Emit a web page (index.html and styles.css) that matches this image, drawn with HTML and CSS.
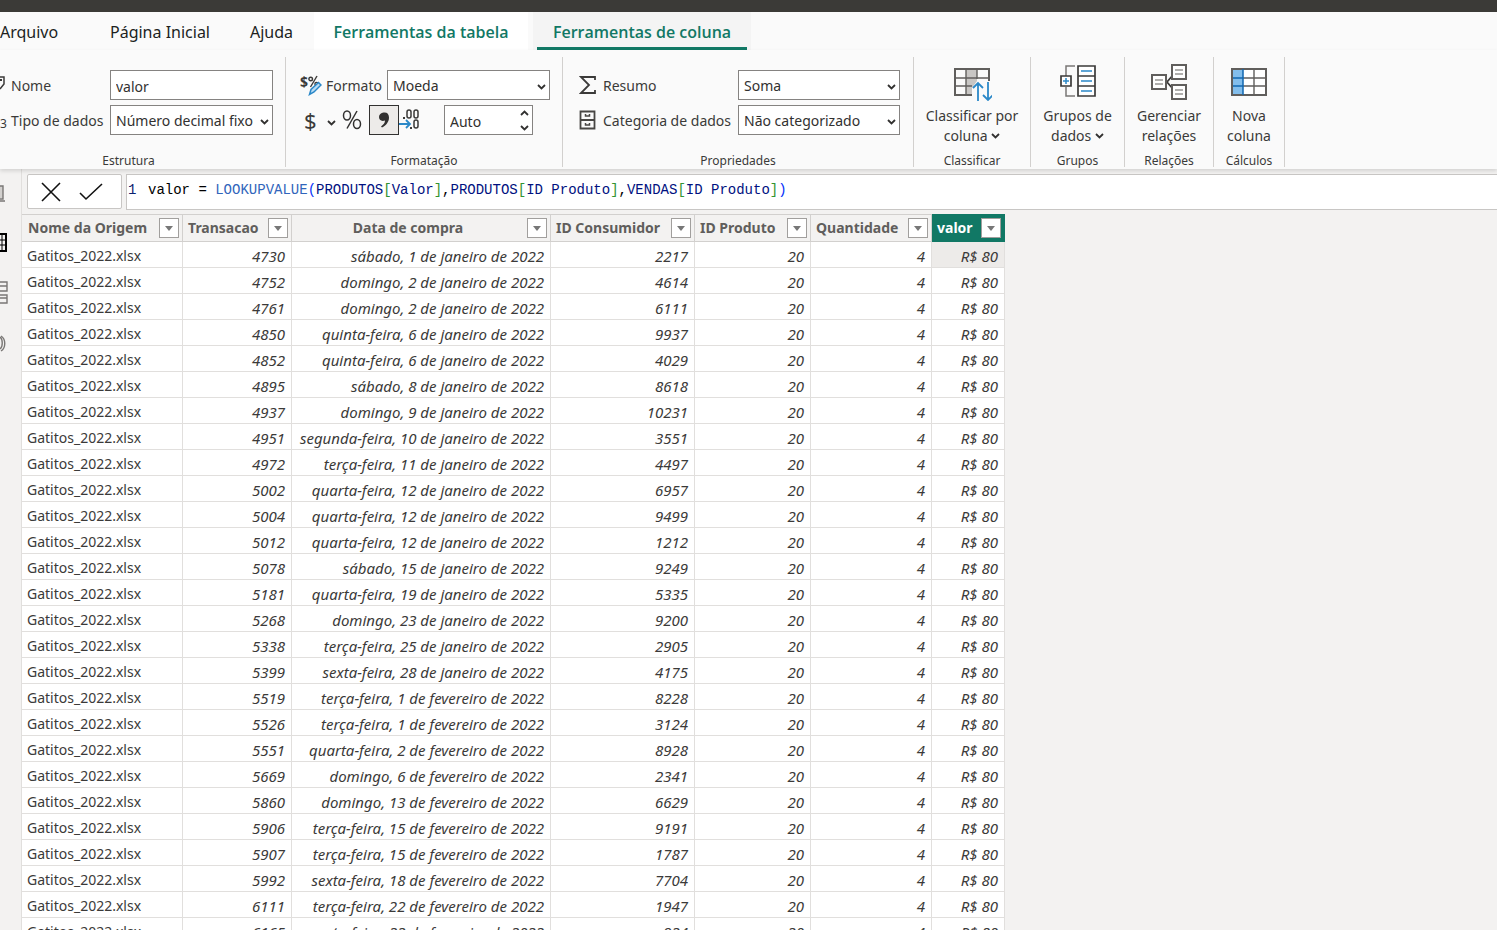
FILE: index.html
```html
<!DOCTYPE html>
<html lang="pt-BR">
<head>
<meta charset="utf-8">
<title>Ferramentas de coluna</title>
<link rel="stylesheet" href="styles.css">
</head>
<body>
<svg class="defs" aria-hidden="true">
  <symbol id="chevron" viewBox="0 0 9 6"><path d="M1 1l3.5 3.5L8 1" fill="none" stroke="#323130" stroke-width="1.8"/></symbol>
  <symbol id="arrow" viewBox="0 0 8 5"><path d="M0 0h8L4 5z" fill="#777"/></symbol>
</svg>
<div class="titlebar"></div>
<nav class="tabs">
  <button class="tab tab-file">Arquivo</button>
  <button class="tab tab-home">Página Inicial</button>
  <button class="tab tab-help">Ajuda</button>
  <button class="tab tab-context">Ferramentas da tabela</button>
  <button class="tab tab-context tab-active">Ferramentas de coluna</button>
</nav>

<section class="ribbon">
  <div class="group group-structure">
    <div class="fields">
      <svg width="6" height="20" viewBox="0 0 6 20"><path d="M0 2h4v7L0 14" fill="none" stroke="#3b3a39" stroke-width="1.5"/><path d="M0 5h2" stroke="#3b3a39" stroke-width="2"/></svg>
      <label for="name">Nome</label>
      <input class="field" id="name" type="text" value="valor">
      <span class="type-icon">3</span>
      <label for="type">Tipo de dados</label>
      <span class="select"><select class="field" id="type"><option>Número decimal fixo</option></select><svg class="chevron"><use href="#chevron"/></svg></span>
    </div>
    <div class="caption">Estrutura</div>
  </div>

  <div class="group group-format">
    <div class="rows">
      <div class="row">
        <span class="format-icon"><b>$</b><svg width="14" height="22" viewBox="0 0 14 22"><g fill="none" stroke="#3b3a39" stroke-width="1.4"><circle cx="2.700" cy="5" r="1.800"/><circle cx="8.500" cy="10" r="1.600"/><path d="M9 2L2.500 13"/></g><path d="M10.500 8.500l2.500 2.500-7 7-4.500 2.500 1.500-5z" fill="#b9dcf5" stroke="#2b88c8" stroke-width="1.500"/></svg></span>
        <label for="format">Formato</label>
        <span class="select"><select class="field" id="format"><option>Moeda</option></select><svg class="chevron"><use href="#chevron"/></svg></span>
      </div>
      <div class="row">
        <button class="tool tool-currency" aria-label="Moeda"><span>$</span><svg class="chevron-small"><use href="#chevron"/></svg></button>
        <button class="tool tool-percent" aria-label="Porcentagem"><svg width="20" height="22" viewBox="0 0 20 22"><g fill="none" stroke="#323130" stroke-width="1.500"><ellipse cx="5" cy="6.500" rx="3.500" ry="4.500"/><ellipse cx="15" cy="15" rx="3.500" ry="4.500"/><path d="M15 2L5 19.500"/></g></svg></button>
        <button class="tool tool-comma" aria-label="Separador de milhares"><svg width="12" height="16" viewBox="0 0 12 16"><path d="M5.5 0.5C9 0 11 2 11 5.500c0 4.500-3 8-7 10l-1-1c2.500-2 4-3.500 4-6-4 1.300-6-1-6-3.500S3 .8 5.500.5z" fill="#323130"/></svg></button>
        <svg class="decimals" width="22" height="22" viewBox="0 0 22 22"><g fill="none" stroke="#3b3a39" stroke-width="1.5"><rect x="8" y="1" width="4" height="8" rx="2"/><rect x="15" y="1" width="4" height="8" rx="2"/><rect x="15" y="11" width="4" height="8" rx="2"/></g><path d="M4 8h2v2H4zM11 18h2v2h-2z" fill="#3b3a39"/><path d="M0 15h11M7 11l4 4-4 4" fill="none" stroke="#2b88c8" stroke-width="1.8"/></svg>
        <span class="spinner"><input class="field" type="text" value="Auto" aria-label="Casas decimais"><span class="spin-arrows"><svg class="chevron chevron-up"><use href="#chevron"/></svg><svg class="chevron"><use href="#chevron"/></svg></span></span>
      </div>
    </div>
    <div class="caption">Formatação</div>
  </div>

  <div class="group group-properties">
    <div class="fields">
      <svg width="18" height="20" viewBox="0 0 18 20"><path d="M16 5V2H2l8 8-8 8h14v-3" fill="none" stroke="#3b3a39" stroke-width="1.8"/></svg>
      <label for="summary">Resumo</label>
      <span class="select"><select class="field" id="summary"><option>Soma</option></select><svg class="chevron"><use href="#chevron"/></svg></span>
      <svg width="18" height="20" viewBox="0 0 18 20"><g fill="none" stroke="#484644" stroke-width="1.5"><path d="M1.500 1.500h14v17h-14zM1.500 10h14" stroke-width="1.800"/><path d="M6.500 4v2h4V4M6.500 13v2h4v-2"/></g></svg>
      <label for="category">Categoria de dados</label>
      <span class="select"><select class="field" id="category"><option>Não categorizado</option></select><svg class="chevron"><use href="#chevron"/></svg></span>
    </div>
    <div class="caption">Propriedades</div>
  </div>

  <div class="group group-sort">
    <button class="command">
      <svg width="40" height="38" viewBox="0 0 40 38"><path d="M14 6h11v12l-5 7v6h-6z" fill="#c8c6c4"/><g fill="none" stroke="#605e5c"><path d="M20 32H3V6h34v12" stroke-width="2"/><path d="M14 6v26M25 6v10M3 15h34M3 23h17" stroke-width="1.400"/></g><path d="M26 38V20M21 25l5-5 5 5M36 19v18M31 32l5 5 5-5" fill="none" stroke="#2b88c8" stroke-width="1.800"/></svg>
      <span>Classificar por<br>coluna <svg class="chevron"><use href="#chevron"/></svg></span>
    </button>
    <div class="caption">Classificar</div>
  </div>
  <div class="group group-groups">
    <button class="command">
      <svg width="38" height="38" viewBox="0 0 38 38"><g fill="none" stroke="#797775" stroke-width="1.500"><path d="M16 3H7v10M7 24v9h9"/></g><g fill="#fff" stroke="#3b3a39" stroke-width="1.700"><path d="M2 13h10v10H2zM19 3h17v30H19z"/><path d="M19 13h17M19 23h17" /></g><path d="M4 18h6M7 15v6M22 8h11M22 18h11M22 28h11" stroke="#2b88c8" stroke-width="1.500"/></svg>
      <span>Grupos de<br>dados <svg class="chevron"><use href="#chevron"/></svg></span>
    </button>
    <div class="caption">Grupos</div>
  </div>
  <div class="group group-relations">
    <button class="command">
      <svg width="38" height="38" viewBox="0 0 38 38"><path d="M23 12l-6 7 6 7" fill="none" stroke="#3b3a39" stroke-width="1.800"/><g fill="#fff" stroke="#605e5c" stroke-width="2"><path d="M2 12h14v14H2zM22 2h14v14H22zM22 22h14v14H22z"/></g><path d="M5 17h8M5 21h8M25 7h8M25 11h8M25 27h8M25 31h8" stroke="#979593" stroke-width="1.300"/></svg>
      <span>Gerenciar<br>relações</span>
    </button>
    <div class="caption">Relações</div>
  </div>
  <div class="group group-calc">
    <button class="command">
      <svg width="38" height="38" viewBox="0 0 38 38"><path d="M2 6h34v26H2z" fill="#fff"/><path d="M2 6h11v26H2z" fill="#83beec"/><g fill="none" stroke="#605e5c"><path d="M13 15h23M13 23h23M24 6v26" stroke-width="1.400"/><path d="M2 6h34v26H2z" stroke-width="2"/></g><path d="M3 15h10M3 23h10M13 6v26" fill="none" stroke="#1067b0" stroke-width="1.500"/></svg>
      <span>Nova<br>coluna</span>
    </button>
    <div class="caption">Cálculos</div>
  </div>
</section>

<div class="workspace">
  <aside class="rail">
    <svg width="8" height="20" viewBox="0 0 8 20"><path d="M0 1h3v12H0z" fill="#d2d0ce"/><path d="M0 1h3v13H0M0 16h5" fill="none" stroke="#797775" stroke-width="1.400"/></svg>
    <svg width="8" height="20" viewBox="0 0 8 20"><path d="M0 1h6v17H0" fill="none" stroke="#000" stroke-width="2"/><path d="M0 7h6M0 12h6M2 2v15" fill="none" stroke="#000" stroke-width="1"/></svg>
    <svg width="9" height="24" viewBox="0 0 9 24"><path d="M0 1h7v9H0M0 5h7M0 14h7v8H0M0 17h7" fill="none" stroke="#797775" stroke-width="1.400"/></svg>
    <svg width="8" height="20" viewBox="0 0 8 20"><path d="M0 4c3 2 3 10 0 12M1 3c5 3 5 12 0 15" fill="none" stroke="#797775" stroke-width="1.400"/></svg>
  </aside>
  <main class="content">
    <div class="formula">
      <div class="formula-actions">
        <button aria-label="Cancelar"><svg width="20" height="20" viewBox="0 0 20 20"><path d="M1 1l18 18M19 1L1 19" stroke="#111" stroke-width="1.600"/></svg></button>
        <button aria-label="Confirmar"><svg width="24" height="20" viewBox="0 0 24 20"><path d="M1 11l6 6L23 2" fill="none" stroke="#111" stroke-width="1.600"/></svg></button>
      </div>
      <div class="formula-editor"><span class="line-no">1</span><code>valor = <span class="fn">LOOKUPVALUE</span><span class="paren">(</span><span class="ref">PRODUTOS</span><span class="brk">[</span><span class="ref">Valor</span><span class="brk">]</span>,<span class="ref">PRODUTOS</span><span class="brk">[</span><span class="ref">ID Produto</span><span class="brk">]</span>,<span class="ref">VENDAS</span><span class="brk">[</span><span class="ref">ID Produto</span><span class="brk">]</span><span class="paren">)</span></code></div>
    </div>
    <table class="grid">
      <colgroup><col class="c-origin"><col class="c-trans"><col class="c-date"><col class="c-consumer"><col class="c-product"><col class="c-qty"><col class="c-value"></colgroup>
      <thead>
        <tr>
          <th><div class="head"><span>Nome da Origem</span><button aria-label="Filtrar origem"><svg width="8" height="5"><use href="#arrow"/></svg></button></div></th>
          <th><div class="head"><span>Transacao</span><button aria-label="Filtrar transação"><svg width="8" height="5"><use href="#arrow"/></svg></button></div></th>
          <th><div class="head head-center"><span>Data de compra</span><button aria-label="Filtrar data"><svg width="8" height="5"><use href="#arrow"/></svg></button></div></th>
          <th><div class="head"><span>ID Consumidor</span><button aria-label="Filtrar consumidor"><svg width="8" height="5"><use href="#arrow"/></svg></button></div></th>
          <th><div class="head"><span>ID Produto</span><button aria-label="Filtrar produto"><svg width="8" height="5"><use href="#arrow"/></svg></button></div></th>
          <th><div class="head"><span>Quantidade</span><button aria-label="Filtrar quantidade"><svg width="8" height="5"><use href="#arrow"/></svg></button></div></th>
          <th class="selected"><div class="head"><span>valor</span><button aria-label="Filtrar valor"><svg width="8" height="5"><use href="#arrow"/></svg></button></div></th>
        </tr>
      </thead>
      <tbody>
        <tr><td>Gatitos_2022.xlsx<td>4730<td>sábado, 1 de janeiro de 2022<td>2217<td>20<td>4<td class="current">R$ 80</tr>
        <tr><td>Gatitos_2022.xlsx<td>4752<td>domingo, 2 de janeiro de 2022<td>4614<td>20<td>4<td>R$ 80</tr>
        <tr><td>Gatitos_2022.xlsx<td>4761<td>domingo, 2 de janeiro de 2022<td>6111<td>20<td>4<td>R$ 80</tr>
        <tr><td>Gatitos_2022.xlsx<td>4850<td>quinta-feira, 6 de janeiro de 2022<td>9937<td>20<td>4<td>R$ 80</tr>
        <tr><td>Gatitos_2022.xlsx<td>4852<td>quinta-feira, 6 de janeiro de 2022<td>4029<td>20<td>4<td>R$ 80</tr>
        <tr><td>Gatitos_2022.xlsx<td>4895<td>sábado, 8 de janeiro de 2022<td>8618<td>20<td>4<td>R$ 80</tr>
        <tr><td>Gatitos_2022.xlsx<td>4937<td>domingo, 9 de janeiro de 2022<td>10231<td>20<td>4<td>R$ 80</tr>
        <tr><td>Gatitos_2022.xlsx<td>4951<td>segunda-feira, 10 de janeiro de 2022<td>3551<td>20<td>4<td>R$ 80</tr>
        <tr><td>Gatitos_2022.xlsx<td>4972<td>terça-feira, 11 de janeiro de 2022<td>4497<td>20<td>4<td>R$ 80</tr>
        <tr><td>Gatitos_2022.xlsx<td>5002<td>quarta-feira, 12 de janeiro de 2022<td>6957<td>20<td>4<td>R$ 80</tr>
        <tr><td>Gatitos_2022.xlsx<td>5004<td>quarta-feira, 12 de janeiro de 2022<td>9499<td>20<td>4<td>R$ 80</tr>
        <tr><td>Gatitos_2022.xlsx<td>5012<td>quarta-feira, 12 de janeiro de 2022<td>1212<td>20<td>4<td>R$ 80</tr>
        <tr><td>Gatitos_2022.xlsx<td>5078<td>sábado, 15 de janeiro de 2022<td>9249<td>20<td>4<td>R$ 80</tr>
        <tr><td>Gatitos_2022.xlsx<td>5181<td>quarta-feira, 19 de janeiro de 2022<td>5335<td>20<td>4<td>R$ 80</tr>
        <tr><td>Gatitos_2022.xlsx<td>5268<td>domingo, 23 de janeiro de 2022<td>9200<td>20<td>4<td>R$ 80</tr>
        <tr><td>Gatitos_2022.xlsx<td>5338<td>terça-feira, 25 de janeiro de 2022<td>2905<td>20<td>4<td>R$ 80</tr>
        <tr><td>Gatitos_2022.xlsx<td>5399<td>sexta-feira, 28 de janeiro de 2022<td>4175<td>20<td>4<td>R$ 80</tr>
        <tr><td>Gatitos_2022.xlsx<td>5519<td>terça-feira, 1 de fevereiro de 2022<td>8228<td>20<td>4<td>R$ 80</tr>
        <tr><td>Gatitos_2022.xlsx<td>5526<td>terça-feira, 1 de fevereiro de 2022<td>3124<td>20<td>4<td>R$ 80</tr>
        <tr><td>Gatitos_2022.xlsx<td>5551<td>quarta-feira, 2 de fevereiro de 2022<td>8928<td>20<td>4<td>R$ 80</tr>
        <tr><td>Gatitos_2022.xlsx<td>5669<td>domingo, 6 de fevereiro de 2022<td>2341<td>20<td>4<td>R$ 80</tr>
        <tr><td>Gatitos_2022.xlsx<td>5860<td>domingo, 13 de fevereiro de 2022<td>6629<td>20<td>4<td>R$ 80</tr>
        <tr><td>Gatitos_2022.xlsx<td>5906<td>terça-feira, 15 de fevereiro de 2022<td>9191<td>20<td>4<td>R$ 80</tr>
        <tr><td>Gatitos_2022.xlsx<td>5907<td>terça-feira, 15 de fevereiro de 2022<td>1787<td>20<td>4<td>R$ 80</tr>
        <tr><td>Gatitos_2022.xlsx<td>5992<td>sexta-feira, 18 de fevereiro de 2022<td>7704<td>20<td>4<td>R$ 80</tr>
        <tr><td>Gatitos_2022.xlsx<td>6111<td>terça-feira, 22 de fevereiro de 2022<td>1947<td>20<td>4<td>R$ 80</tr>
        <tr><td>Gatitos_2022.xlsx<td>6165<td>sexta-feira, 22 de fevereiro de 2022<td>924<td>20<td>4<td>R$ 80</tr>
      </tbody>
    </table>
  </main>
</div>
</body>
</html>
```
FILE: styles.css
```css
* { box-sizing: border-box; }
body {
  margin: 0;
  height: 100vh;
  overflow: hidden;
  display: flex;
  flex-direction: column;
  background: #f3f2f1;
  color: #3b3a39;
  font: 14px/20px "Noto Sans", "Open Sans", sans-serif;
}
button { font: inherit; color: inherit; border: 0; background: none; padding: 0; }
svg { display: block; flex: none; overflow: hidden; }
.defs { position: absolute; width: 0; height: 0; }

.titlebar { flex: none; height: 12px; background: #3b3a37; }
.tabs { flex: none; display: flex; height: 38px; background: #fafafa; }
.tab { padding-top: 2px; font-size: 16px; text-align: left; white-space: nowrap; color: #201f1e; }
.tab-file { width: 110px; }
.tab-home { width: 140px; }
.tab-help { width: 64px; }
.tab-context {
  width: 214px;
  margin-right: 5px;
  text-align: center;
  font-family: "Open Sans", sans-serif;
  font-weight: 600;
  color: #117865;
  background: #fff;
}
.tab-active {
  width: 218px;
  background: linear-gradient(#117865, #117865) center bottom / 210px 3px no-repeat #f4f4f4;
}

.ribbon {
  flex: none;
  display: flex;
  padding: 7px 0 2px;
  background: #fafafa;
  box-shadow: 0 2px 4px #0002;
  z-index: 1;
}
.group {
  display: flex;
  flex-direction: column;
  justify-content: space-between;
  height: 110px;
  border-right: 1px solid #d2d0ce;
}
.caption { font-size: 12px; line-height: 12px; text-align: center; }
.fields { display: grid; align-items: center; row-gap: 5px; padding-top: 13px; white-space: nowrap; }
.fields label, .row label { padding-top: 2px; }
.group-structure { width: 286px; padding-right: 12px; }
.group-structure .fields { grid-template-columns: 11px 99px 163px; }
.group-structure .caption { padding-right: 16px; }
.group-format { width: 277px; }
.group-properties { width: 351px; padding: 0 13px 0 16px; }
.group-properties .fields { grid-template-columns: 24px 135px 162px; }
.group-properties .caption { padding-right: 3px; }
.type-icon { font-size: 12px; padding-top: 8px; }
.field {
  width: 100%;
  height: 30px;
  padding: 2px 5px 0;
  border: 1px solid #858381;
  border-radius: 0;
  background: #fff;
  color: #323130;
  font: inherit;
  appearance: none;
}
.select, .spinner { display: grid; align-items: center; }
.select > *, .spinner > * { grid-area: 1 / 1; }
.chevron { width: 9px; height: 6px; pointer-events: none; }
.select .chevron { justify-self: end; margin-right: 4px; margin-top: 4px; }
.rows { display: flex; flex-direction: column; gap: 5px; padding-top: 13px; }
.row { display: flex; align-items: center; height: 30px; padding-left: 14px; }
.format-icon { display: flex; width: 26px; height: 22px; line-height: 16px; color: #3b3a39; }
.row label { width: 61px; }
.row .select { width: 163px; }
.tool { height: 30px; font-size: 22px; line-height: 28px; }
.tool-currency { width: 42px; padding-left: 4px; display: flex; align-items: center; justify-content: space-between; }
.chevron-small { width: 9px; height: 6px; margin: 6px 6px 0 0; }
.tool-percent { width: 27px; display: flex; align-items: center; }
.tool-comma { width: 30px; display: grid; place-items: center; border: 1px solid #323130; background: #edebe9; }
.spinner { width: 89px; margin-left: 23px; }
.spin-arrows { justify-self: end; display: grid; gap: 9px; margin-right: 4px; }
.chevron-up { transform: rotate(180deg); }

.command { display: flex; flex-direction: column; align-items: center; padding-top: 6px; white-space: nowrap; }
.command > span { padding-top: 5px; }
.command span .chevron { display: inline-block; vertical-align: 2px; }
.group-sort { width: 117px; }
.group-groups { width: 94px; }
.group-relations { width: 89px; }
.group-calc { width: 71px; }

.workspace { flex: 1; min-height: 0; display: flex; }
.rail { flex: none; width: 22px; padding-top: 16px; border-right: 1px solid #e1dfdd; display: flex; flex-direction: column; gap: 28px; }
.content { flex: 1; min-width: 0; overflow: hidden; }
.formula { display: flex; gap: 4px; padding: 5px 0 4px 5px; }
.formula-actions {
  display: flex;
  align-items: center;
  gap: 18px;
  width: 95px;
  height: 35px;
  padding-left: 13px;
  border: 1px solid #c8c6c4;
  border-radius: 2px;
  background: #fff;
}
.formula-editor {
  flex: 1;
  height: 36px;
  padding: 5px 0 0 1px;
  border: 1px solid #c8c6c4;
  border-right: 0;
  background: #fff;
  font: 14px/20px "Liberation Mono", monospace;
  color: #000;
  white-space: pre;
}
.formula code { font: inherit; }
.line-no { display: inline-block; width: 20px; color: #0b216f; }
.fn { color: #3165bb; }
.paren { color: #0431fa; }
.brk { color: #319331; }
.ref { color: #001080; }

.grid { width: 983px; table-layout: fixed; border-collapse: separate; border-spacing: 0; }
.c-origin { width: 161px; }
.c-trans { width: 109px; }
.c-date { width: 259px; }
.c-consumer { width: 144px; }
.c-product { width: 116px; }
.c-qty { width: 121px; }
.c-value { width: 73px; }
.grid th {
  height: 28px;
  padding: 0 3px 0 5px;
  border: solid #d2d0ce;
  border-width: 1px 1px 1px 0;
  background: #f3f2f1;
  color: #605e5c;
}
.grid th:first-child { padding-left: 6px; }
.head { display: flex; align-items: center; justify-content: space-between; white-space: nowrap; }
.head button { flex: none; display: grid; place-items: center; width: 20px; height: 20px; border: 1px solid #a19f9d; background: #fff; }
.head-center span { flex: 1; padding-right: 8px; text-align: center; }
.grid .selected { background: #117865; border-color: #117865; color: #fff; }
.grid td {
  height: 26px;
  padding: 2px 6px 0;
  line-height: 20px;
  border: solid #e1dfdd;
  border-width: 0 1px 1px 0;
  background: #fff;
  font-size: 15px;
  font-style: italic;
  text-align: right;
  white-space: nowrap;
}
.grid td:first-child { padding-left: 5px; font-size: 14px; font-style: normal; text-align: left; }
.grid .current { background: #edebe9; }
```
